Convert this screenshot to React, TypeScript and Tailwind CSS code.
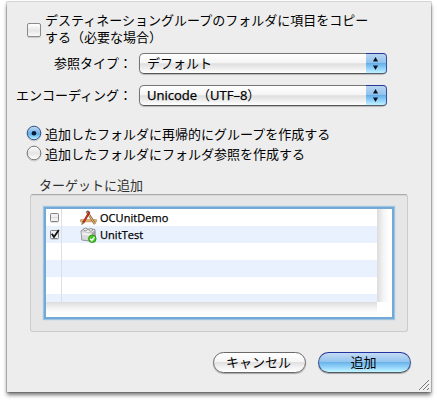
import type { ReactNode } from "react";

function Stepper() {
  return (
    <span className="flex h-full w-[21px] items-center justify-center rounded-r-[4px] border border-l-0 border-t-[#23369a] border-r-[#34559c] border-b-[#555e66] bg-[linear-gradient(180deg,#b9d5f0_0%,#92c3ec_45%,#66b0e8_50%,#8fd0fa_75%,#c2f4ff_100%)]">
      <svg width="5" height="13" viewBox="0 0 5 13" className="mr-px block" fill="#0b1420">
        <path d="M2.5 0 5 4.5H0Z" />
        <path d="M0 8.5H5L2.5 13Z" />
      </svg>
    </span>
  );
}

function Popup({ children }: { children: ReactNode }) {
  return (
    <div className="flex h-[21px] w-[248px] rounded-[5px] shadow-[0_1px_1px_rgba(0,0,0,0.22)]">
      <span className="flex h-full w-[227px] items-center rounded-l-[5px] border border-r-0 border-t-[#777] border-b-[#555] border-l-[#777] bg-[linear-gradient(180deg,#fff_0%,#f5f5f5_45%,#dfdfdf_52%,#f1f1f1_80%,#fff_100%)] pb-px pl-[7px] whitespace-nowrap">
        {children}
      </span>
      <Stepper />
    </div>
  );
}

function Radio({ on }: { on?: boolean }) {
  return (
    <svg width="16" height="17" viewBox="0 0 16 17" className="-mt-px block shrink-0">
      <defs>
        <linearGradient id="radioOn" x1="0" y1="0" x2="0" y2="1">
          <stop offset="0" stopColor="#c4dbf4" />
          <stop offset="0.45" stopColor="#79b5e8" />
          <stop offset="0.6" stopColor="#64b1ec" />
          <stop offset="1" stopColor="#c2f6ff" />
        </linearGradient>
        <linearGradient id="radioOff" x1="0" y1="0" x2="0" y2="1">
          <stop offset="0" stopColor="#fff" />
          <stop offset="0.5" stopColor="#e4e4e4" />
          <stop offset="1" stopColor="#fff" />
        </linearGradient>
      </defs>
      <circle cx="8" cy="9" r="7" fill="none" stroke="#000" strokeOpacity="0.15" />
      <circle cx="8" cy="8" r="6.8" fill={on ? "url(#radioOn)" : "url(#radioOff)"} stroke={on ? "#34518c" : "#777"} />
      {on && <circle cx="8" cy="8.2" r="2.3" fill="#061c36" />}
    </svg>
  );
}

function SmallCheck({ on }: { on?: boolean }) {
  return (
    <svg width="12" height="13" viewBox="0 0 12 13" className="block">
      <rect x="1.5" y="2.5" width="8" height="8" rx="0.8" fill="#f1f1f1" stroke="#858585" />
      <path d="M2 6.5H9" stroke="#dcdcdc" />
      <path d="M1.5 11.5H9.5" stroke="#000" strokeOpacity="0.12" />
      {on && <path d="M2.8 5.8 5 9 9.8 2" fill="none" stroke="#111" strokeWidth="1.8" />}
    </svg>
  );
}

function AppIcon() {
  return (
    <svg width="17" height="16" viewBox="0 0 17 16" className="block">
      <path d="M0.5 9.6H16.5V11.8H0.5Z" fill="#e3b568" stroke="#a9743a" strokeWidth="0.5" />
      <path d="M7.2 2 15 14" stroke="#8b6540" strokeWidth="2.3" />
      <path d="M7.4 2.4 14.8 13.8" stroke="#edc77e" strokeWidth="1" />
      <path d="M9.4 2 3.4 12.6" stroke="#a5180f" strokeWidth="2.1" />
      <path d="M9 2.5 3.8 11.8" stroke="#df4631" strokeWidth="0.8" />
      <path d="M6 2.6 7.4 1.2 9.4 1.6" fill="none" stroke="#666" strokeWidth="1.2" />
      <path d="M2.5 11.8 1.6 14.5 4.2 12.9Z" fill="#d8ad52" stroke="#4a3529" strokeWidth="0.5" />
    </svg>
  );
}

function BundleIcon() {
  return (
    <svg width="17" height="16" viewBox="0 0 17 16" className="block">
      <path d="M1 3.8 4.2 1.8 15 2.4 15.4 11 12.6 14.4 1.8 13Z" fill="#a9a9a9" stroke="#858585" strokeWidth="0.8" />
      <path d="M1.3 4.2 4.5 2.3 14.8 2.9 12 5.4Z" fill="#f6f6f6" />
      <path d="M1.4 4.6 11.9 5.9V13.8L2.1 12.6Z" fill="#d8d8d8" />
      <path d="M2.2 5.6 11 6.7V9L2.4 8Z" fill="#f0f0f0" />
      <ellipse cx="5.4" cy="2.5" rx="1.9" ry="1.3" fill="#f5f5f5" stroke="#777" strokeWidth="0.8" />
      <ellipse cx="10.8" cy="2.9" rx="1.9" ry="1.3" fill="#f5f5f5" stroke="#777" strokeWidth="0.8" />
      <circle cx="12.3" cy="11.8" r="3.8" fill="#45c823" stroke="#25870f" strokeWidth="0.8" />
      <path d="M10.2 11.8 11.8 13.6 14.5 10" fill="none" stroke="#fff" strokeWidth="1.3" />
    </svg>
  );
}

function Row({ check, icon, name, tint }: { check?: ReactNode; icon?: ReactNode; name?: string; tint?: boolean }) {
  return (
    <div className={`flex h-[17px] shrink-0 items-center ${tint ? "bg-[#eaf1fe]" : "bg-white"}`}>
      <span className="flex h-full w-4 items-center border-r border-[#dcdfe5] pl-[3px]">{check}</span>
      <span className="ml-[18px] w-5">{icon}</span>
      <span className="-mt-px font-['Open_Sans','Noto_Sans',sans-serif] text-[11px] leading-[15px] tracking-[0.05px] [-webkit-text-stroke:0.25px_black]">{name}</span>
    </div>
  );
}

export default function App() {
  return (
    <div className="h-[403px] w-[438px] overflow-hidden bg-white pt-[2px] pl-[7px] font-['Open_Sans','Noto_Sans_CJK_JP',sans-serif] text-[13px] leading-[17px] text-black">
      <main className="relative flex h-[390px] w-[424px] flex-col bg-[#ededed] shadow-[0_0_0_0.5px_rgba(0,0,0,0.3),0_3px_4px_rgba(0,0,0,0.55)]">
        <label className="mt-[10px] ml-5 flex h-[34px] items-center">
          <span className="mt-[1px] mr-1 h-[14px] w-[14px] rounded-[2px] border border-[#8b8b8b] bg-[linear-gradient(180deg,#fff,#e6e6e6_55%,#fafafa)] shadow-[0_1px_1px_rgba(0,0,0,0.15)]" />
          <span className="whitespace-nowrap">
            デスティネーショングループのフォルダに項目をコピー
            <br />
            する（必要な場合）
          </span>
        </label>

        <div className="mt-[7px] flex h-[21px] items-center">
          <span className="w-[125px] text-right whitespace-nowrap">参照タイプ：</span>
          <span className="ml-[7px]"><Popup>デフォルト</Popup></span>
        </div>
        <div className="mt-[11px] flex h-[21px] items-center">
          <span className="w-[125px] text-right whitespace-nowrap">エンコーディング：</span>
          <span className="ml-[7px]"><Popup><span className="[-webkit-text-stroke:0.25px_black]">Unicode</span>（<span className="[-webkit-text-stroke:0.25px_black]">UTF–8</span>）</Popup></span>
        </div>

        <div className="mt-[18px] ml-[19px] flex flex-col">
          <label className="flex h-5 items-center gap-[3px]"><Radio on />追加したフォルダに再帰的にグループを作成する</label>
          <label className="flex h-5 items-center gap-[3px]"><Radio />追加したフォルダにフォルダ参照を作成する</label>
        </div>

        <h2 className="mt-[13px] ml-8 h-[17px] text-[#303030]">ターゲットに追加</h2>

        <section className="ml-[23px] h-[138px] w-[378px] rounded-[3px] border border-[#cbcbcb] border-t-[#a9a9a9] bg-[#e6e6e6] pt-[14px] pl-[15px] shadow-[inset_0_1px_0_#d8d8d8]">
          <div className="flex h-[108px] w-[346px] flex-col bg-white shadow-[0_0_0_2px_#72a9d6,0_0_1px_3px_#9dc4e3]">
            <div className="flex h-[93px]">
              <div className="flex w-[331px] flex-col overflow-hidden">
                <Row check={<SmallCheck />} icon={<AppIcon />} name="OCUnitDemo" />
                <Row check={<SmallCheck on />} icon={<BundleIcon />} name="UnitTest" tint />
                <Row />
                <Row tint />
                <Row />
                <Row tint />
              </div>
              <div className="w-[15px] bg-[linear-gradient(90deg,#dcdcdc,#f5f5f5_45%,#fff_80%)]" />
            </div>
            <div className="h-[15px] w-[331px] bg-[linear-gradient(180deg,#dcdcdc,#f5f5f5_45%,#fff_80%)]" />
          </div>
        </section>

        <div className="mt-[20px] flex justify-end gap-3 pr-5">
          <button className="flex h-[21px] w-[93px] items-center justify-center rounded-full border border-[#6a6a6a] bg-[linear-gradient(180deg,#fff_0%,#f5f5f5_45%,#e1e1e1_50%,#f2f2f2_75%,#fff_100%)] pr-[2px] pb-px shadow-[0_1px_1px_rgba(0,0,0,0.3)]">キャンセル</button>
          <button className="flex h-[21px] w-[93px] items-center justify-center rounded-full border border-[#3c4f86] border-t-[#2533a0] border-b-[#505860] bg-[linear-gradient(180deg,#c4dbf4_0%,#95c5ee_45%,#6bb4ea_50%,#94d4fb_75%,#c4f6ff_100%)] pr-[2px] pb-px shadow-[0_1px_1px_rgba(0,0,0,0.3)]">追加</button>
        </div>
        <svg width="12" height="12" viewBox="0 0 12 12" className="absolute right-[1px] bottom-[1px]" fill="none">
          <path d="M1 11 11 1M5 11 11 5M9 11 11 9" stroke="#777" />
          <path d="M2 11.5 11.5 2M6 11.5 11.5 6" stroke="#fff" strokeWidth="0.6" />
        </svg>
      </main>
    </div>
  );
}
